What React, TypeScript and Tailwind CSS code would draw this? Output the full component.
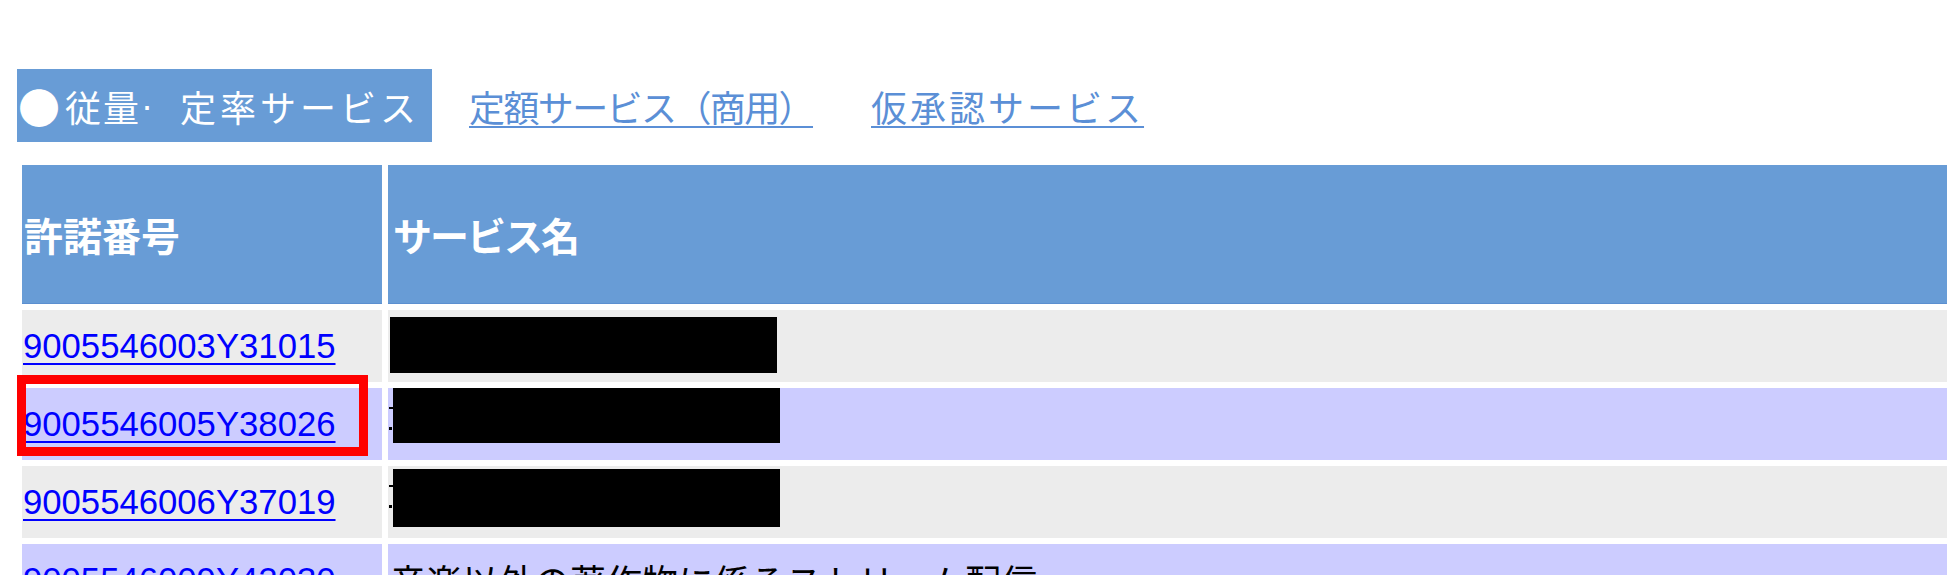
import React from "react";

const rows = [
  { id: "9005546003Y31015", bg: "bg-[#ececec]", box: "ml-[1px] mt-[7px] h-[56px] w-[387px]", peek: false },
  { id: "9005546005Y38026", bg: "bg-[#ccccff]", box: "ml-0 mt-0 h-[55px] w-[387px]", peek: true },
  { id: "9005546006Y37019", bg: "bg-[#ececec]", box: "ml-0 mt-[3px] h-[58px] w-[387px]", peek: true },
];

const linkFont = { fontFamily: '"Liberation Sans", Arial, sans-serif' };

export default function App() {
  return (
    <div
      className="relative w-[1947px] h-[575px] overflow-hidden bg-white"
      style={{ fontFamily: '"Noto Sans CJK JP", "Noto Sans", sans-serif' }}
    >
      {/* tabs */}
      <div className="flex items-center pt-[69px] pl-[17px]">
        <div className="flex h-[73px] w-[415px] items-center bg-[#689cd6] pl-[1px] text-[36px] leading-none text-white">
          <span className="w-[47px] text-[42px] leading-none">●</span>
          <span className="tracking-[2px]">従量</span>
          <span className="w-[39px]" style={linkFont}>·</span>
          <span className="tracking-[4px]">定率サービス</span>
        </div>
        <a className="ml-[37px] text-[36px] leading-none tracking-[-1.6px] text-[#5b8fd6] underline decoration-2 underline-offset-[4px]">
          定額サービス（商用）
        </a>
        <a className="ml-[58px] text-[36px] leading-none tracking-[3px] text-[#5b8fd6] underline decoration-2 underline-offset-[4px]">
          仮承認サービス
        </a>
      </div>

      {/* table */}
      <div className="mt-[23px] ml-[22px] grid w-[1940px] grid-cols-[360px_1fr] gap-x-[6px] gap-y-[6px]">
        <div className="flex h-[139px] items-center border-b border-[#5b8fd0] bg-[#689cd6] pl-[2px] text-[39px] font-semibold leading-none text-white">
          許諾番号
        </div>
        <div className="flex h-[139px] items-center border-b border-[#5b8fd0] bg-[#689cd6] pl-[5px] text-[39px] font-semibold leading-none tracking-[-2px] text-white">
          サービス名
        </div>

        {rows.map((r) => (
          <React.Fragment key={r.id}>
            <div className={`flex h-[72px] items-center pl-[1px] ${r.bg}`}>
              <a
                className="text-[34.7px] leading-none text-[#0000ff] underline decoration-2 underline-offset-[5px]"
                style={linkFont}
              >
                {r.id}
              </a>
            </div>
            <div className={`flex h-[72px] items-start pl-[1px] ${r.bg}`}>
              {r.peek && (
                <div className="flex w-[4px] flex-col gap-[18px] pt-[19px]">
                  <div className="h-[2px] w-[4px] bg-black" />
                  <div className="h-[3px] w-[3px] bg-black" />
                </div>
              )}
              <div className={`bg-black ${r.box}`} />
            </div>
          </React.Fragment>
        ))}

        <div className="flex h-[72px] items-center bg-[#ccccff] pl-[1px]">
          <a
            className="text-[34.7px] leading-none text-[#0000ff] underline decoration-2 underline-offset-[5px]"
            style={linkFont}
          >
            9005546009Y42030
          </a>
        </div>
        <div className="flex h-[72px] items-center bg-[#ccccff] pl-[2px] text-[36px] leading-none text-black">
          音楽以外の著作物に係るストリーム配信
        </div>
      </div>

      {/* red highlight annotation */}
      <div className="absolute left-[17px] top-[375px] h-[81px] w-[351px] border-[9px] border-[#ff0000]" />
    </div>
  );
}
